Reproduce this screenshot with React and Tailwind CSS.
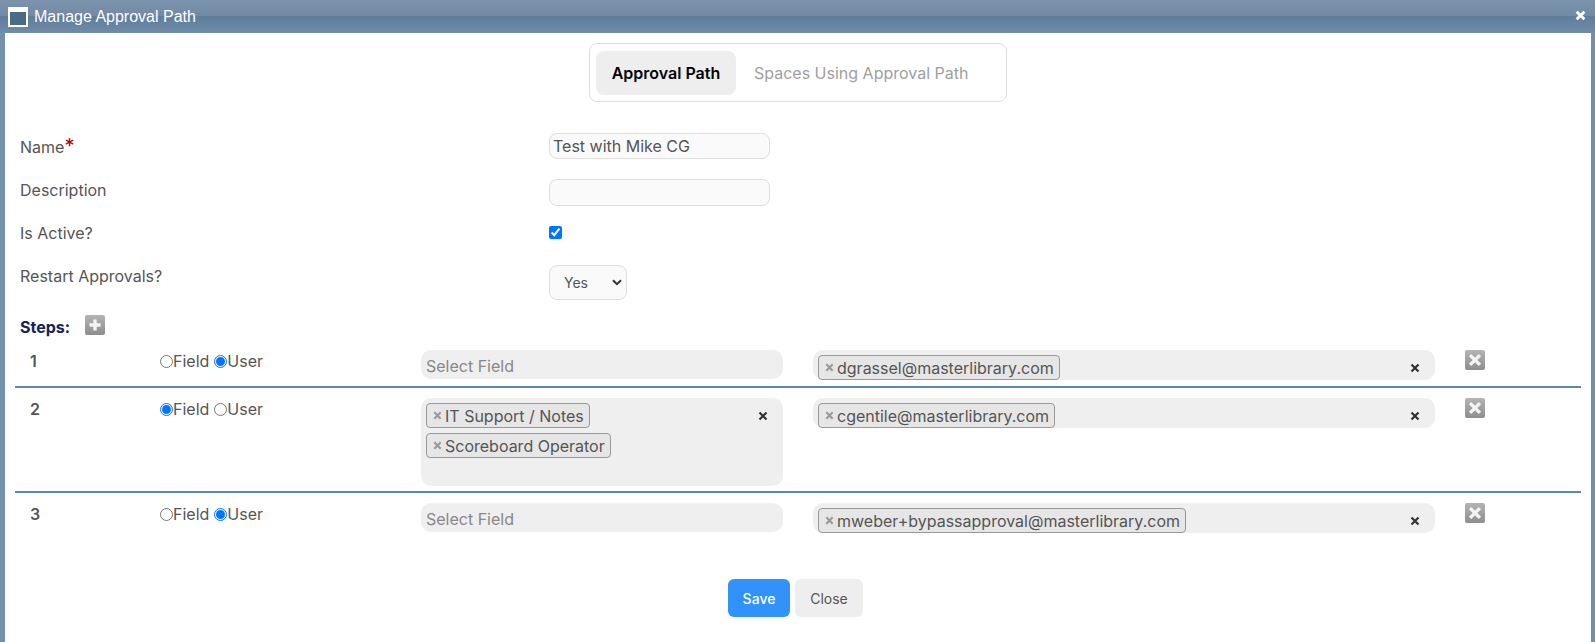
import React from "react";

const XMark = ({ size, color, width = 2 }) => (
  <svg width={size} height={size} viewBox="0 0 10 10" className="block">
    <path d="M1.5 1.5L8.5 8.5M8.5 1.5L1.5 8.5" stroke={color} strokeWidth={width} fill="none" />
  </svg>
);

const Tag = ({ children }) => (
  <span className="flex h-[25px] items-center rounded-[4px] border border-[#999] bg-[#e6e6e6] pl-[6px] pr-[5px] text-[16px] leading-none text-[#555]">
    <span className="mr-[3px] flex w-[9px] justify-center">
      <XMark size={9} color="#999" width={2.4} />
    </span>
    {children}
  </span>
);

const Radio = ({ checked }) =>
  checked ? (
    <span className="flex h-[13px] w-[13px] items-center justify-center rounded-full border border-[#0075ff] bg-white">
      <span className="h-[9px] w-[9px] rounded-full bg-[#0075ff]" />
    </span>
  ) : (
    <span className="h-[13px] w-[13px] rounded-full border border-[#767676] bg-white" />
  );

const GrayBtn = ({ children }) => (
  <span className="flex h-5 w-5 items-center justify-center rounded-[2px] bg-gradient-to-b from-[#b4b4b4] to-[#8e8e8e]">
    {children}
  </span>
);

const Step = ({ num, mode, fields, users, fieldH, pb }) => (
  <div className={`flex items-start ${pb}`}>
    <div className="ml-[25px] w-[130px] pt-[1px] text-[16px] font-semibold leading-[20px] text-[#555]">{num}</div>
    <div className="flex w-[261px] items-center pt-[1px] text-[16px] leading-[20px] text-[#555]">
      <Radio checked={mode === "field"} />
      <span className="mr-[5px]">Field</span>
      <Radio checked={mode === "user"} />
      <span>User</span>
    </div>
    <div
      className={`relative flex w-[362px] flex-col items-start gap-[5px] rounded-[10px] bg-[#efefef] px-[5px] ${fields ? "pt-[5px]" : "justify-center pt-[3px]"} ${fieldH}`}
    >
      {fields ? (
        <>
          {fields.map((f) => (
            <Tag key={f}>{f}</Tag>
          ))}
          <span className="absolute right-[15px] top-[13px]">
            <XMark size={10} color="#333" width={2.2} />
          </span>
        </>
      ) : (
        <span className="text-[16px] leading-none text-[#888]">Select Field</span>
      )}
    </div>
    <div className="relative ml-[30px] flex h-[30px] w-[622px] items-start rounded-[10px] bg-[#efefef] px-[5px] pt-[5px]">
      <Tag>{users}</Tag>
      <span className="absolute right-[15px] top-[13px]">
        <XMark size={10} color="#333" width={2.2} />
      </span>
    </div>
    <div className="ml-[30px]">
      <GrayBtn>
        <XMark size={14} color="#f4f4f4" width={2.4} />
      </GrayBtn>
    </div>
  </div>
);

export default function App() {
  return (
    <div className="flex h-[642px] flex-col bg-[#7390ab] font-['Inter',sans-serif]">
      <div className="relative flex h-[33px] shrink-0 items-center bg-[linear-gradient(to_bottom,#7b93ac_0%,#728aa4_48%,#5f7e9c_50%,#6f8ca9_100%)] pl-[8px] pr-[4px] text-white">
        <span className="flex h-[20px] w-[20px] flex-col border-2 border-white">
          <span className="h-[3px] bg-white" />
          <span className="flex-1 bg-[#4a6a88]" />
        </span>
        <span className="ml-[6px] font-['Liberation_Sans',sans-serif] text-[16px] leading-none">Manage Approval Path</span>
        <span className="ml-auto mr-[5px] mt-[-3px]">
          <XMark size={11} color="#fff" width={2.6} />
        </span>
      </div>

      <div className="ml-[5px] mr-[4px] flex flex-1 flex-col bg-white">
        <div className="mt-[10px] flex justify-center">
          <div className="flex h-[59px] w-[418px] items-center rounded-[8px] border border-[#dddddd] px-[6px]">
            <span className="flex h-[44px] w-[140px] items-center justify-center rounded-[8px] bg-[#eeeeee] pt-[1px] text-[16px] font-semibold text-black">
              Approval Path
            </span>
            <span className="ml-[18px] pt-[1px] text-[16px] text-[#a0a0a0]">Spaces Using Approval Path</span>
          </div>
        </div>

        <div className="mt-[31px] flex h-[26px] items-center pl-[15px]">
          <span className="w-[529px] pt-[1px] text-[16px] text-[#555]">
            Name<span className="text-[20px] leading-none text-[#b00000]">*</span>
          </span>
          <input
            readOnly
            value="Test with Mike CG"
            className="h-[26px] w-[221px] rounded-[8px] border border-[#dddddd] bg-[#fafafa] px-[3px] text-[16px] text-[#555] outline-none"
          />
        </div>

        <div className="mt-[20px] flex h-[27px] items-start pl-[15px]">
          <span className="w-[529px] pt-[1px] text-[16px] leading-[20px] text-[#555]">Description</span>
          <input
            readOnly
            className="h-[27px] w-[221px] rounded-[8px] border border-[#dddddd] bg-[#fafafa] outline-none"
          />
        </div>

        <div className="mt-[18px] flex h-[16px] items-center pl-[15px]">
          <span className="w-[529px] pt-[1px] text-[16px] text-[#555]">Is Active?</span>
          <input type="checkbox" readOnly checked className="m-0 h-[13px] w-[13px] accent-[#0075ff]" />
        </div>

        <div className="mt-[25px] flex h-[36px] items-start pl-[15px]">
          <span className="w-[529px] pt-[1px] text-[16px] leading-[20px] text-[#555]">Restart Approvals?</span>
          <div className="relative">
            <select className="block h-[35px] w-[78px] appearance-none rounded-[8px] border border-[#dddddd] bg-[#fafafa] pl-[14px] text-[14px] text-[#555] outline-none">
              <option>Yes</option>
            </select>
            <svg width="10" height="7" viewBox="0 0 10 7" className="pointer-events-none absolute right-[5px] top-[14px]">
              <path d="M1 1.2L5 5.2L9 1.2" stroke="#333" strokeWidth="2" fill="none" />
            </svg>
          </div>
        </div>

        <div className="mt-[13px] flex h-[21px] items-center pl-[15px]">
          <span className="w-[65px] pt-[5px] text-[16px] font-bold text-[#142459]">Steps:</span>
          <GrayBtn>
            <svg width="14" height="14" viewBox="0 0 14 14" className="block">
              <path d="M7 1.5V12.5M1.5 7H12.5" stroke="#f4f4f4" strokeWidth="3.4" fill="none" />
            </svg>
          </GrayBtn>
        </div>

        <div className="mt-[15px] flex flex-col">
          <Step num="1" mode="user" users="dgrassel@masterlibrary.com" fieldH="h-[29px]" pb="pb-[6px]" />
          <div className="mx-[10px] h-[2px] bg-[#5f88b0]" />
          <div className="h-[10px]" />
          <Step
            num="2"
            mode="field"
            fields={["IT Support / Notes", "Scoreboard Operator"]}
            users="cgentile@masterlibrary.com"
            fieldH="h-[88px]"
            pb="pb-[5px]"
          />
          <div className="mx-[10px] h-[2px] bg-[#5f88b0]" />
          <div className="h-[10px]" />
          <Step num="3" mode="user" users="mweber+bypassapproval@masterlibrary.com" fieldH="h-[29px]" pb="pb-0" />
        </div>

        <div className="ml-[723px] mt-[46px] flex gap-[5px]">
          <span className="flex h-[38px] w-[62px] items-center justify-center rounded-[6px] bg-[#3092fa] text-[14px] font-medium text-white">
            Save
          </span>
          <span className="flex h-[38px] w-[68px] items-center justify-center rounded-[6px] bg-[#eeeeee] text-[14px] text-[#555]">
            Close
          </span>
        </div>
      </div>
    </div>
  );
}
